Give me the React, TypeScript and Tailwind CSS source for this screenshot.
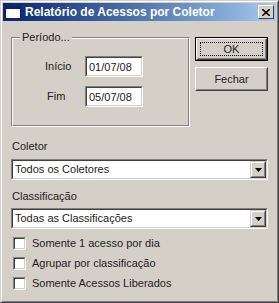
import React from "react";

const Sunken = ({ children, className = "" }: { children: React.ReactNode; className?: string }) => (
  <div className={`border border-t-[#808080] border-l-[#808080] border-r-white border-b-white ${className}`}>
    <div className="h-full border border-t-[#404040] border-l-[#404040] border-r-[#d4d0c8] border-b-[#d4d0c8] bg-white">
      {children}
    </div>
  </div>
);

const Combo = ({ text }: { text: string }) => (
  <Sunken className="h-[21px] mx-[8px]">
    <div className="flex h-full items-center">
      <span className="flex-1 pl-[2px] text-[#222]">{text}</span>
      <div className="w-[16px] h-[17px] border border-t-[#d4d0c8] border-l-[#d4d0c8] border-r-[#404040] border-b-[#404040] bg-[#d4d0c8]">
        <div className="h-full border border-t-white border-l-white border-r-[#808080] border-b-[#808080] flex items-center justify-center">
          <svg width="7" height="4" viewBox="0 0 7 4"><path d="M0 0h7L3.5 4z" fill="#000" /></svg>
        </div>
      </div>
    </div>
  </Sunken>
);

const Check = ({ label }: { label: string }) => (
  <div className="flex items-center h-[20px] pl-[10px]">
    <Sunken className="w-[13px] h-[13px]"><div /></Sunken>
    <span className="ml-[6px] text-[#222]">{label}</span>
  </div>
);

const Button = ({ label, focused }: { label: string; focused?: boolean }) => (
  <div className={`w-[73px] h-[24px] ${focused ? "border border-black" : ""}`}>
    <div className="h-full border border-t-white border-l-white border-r-[#404040] border-b-[#404040]">
      <div className="h-full border border-t-[#d4d0c8] border-l-[#d4d0c8] border-r-[#808080] border-b-[#808080] flex items-center justify-center p-[2px]">
        <div className={`w-full h-full flex items-center justify-center ${focused ? "border border-dotted border-black" : ""}`}>
          <span className="text-[#222]">{label}</span>
        </div>
      </div>
    </div>
  </div>
);

export default function App() {
  return (
    <div className="w-[279px] h-[303px] bg-[#d4d0c8] border border-t-[#d4d0c8] border-l-[#d4d0c8] border-r-[#404040] border-b-[#404040] font-['Liberation_Sans',sans-serif] text-[11px] leading-none">
      <div className="h-full border border-t-white border-l-white border-r-[#808080] border-b-[#808080] p-[1px] flex flex-col">
        <div className="h-[18px] flex items-center bg-gradient-to-r from-[#0a246a] to-[#a6caf0] pl-[2px] pr-[2px]">
          <div className="w-[16px] h-[13px] bg-white border border-[#0a246a] border-t-[3px]" />
          <span className="ml-[4px] flex-1 text-white font-bold text-[12px]">Relatório de Acessos por Coletor</span>
          <div className="w-[16px] h-[14px] bg-[#d4d0c8] border border-t-white border-l-white border-r-[#404040] border-b-[#404040] flex items-center justify-center">
            <svg width="8" height="7" viewBox="0 0 8 7"><path d="M0 0L8 7M8 0L0 7" stroke="#000" strokeWidth="1.6" /></svg>
          </div>
        </div>
        <div className="flex-1 flex flex-col">
          <div className="flex mt-[16px] px-[8px] justify-between">
            <div className="relative w-[179px] h-[90px] border border-t-[#808080] border-l-[#808080] border-r-white border-b-white">
              <div className="h-full border border-t-white border-l-white border-r-[#808080] border-b-[#808080] flex flex-col pt-[17px]">
                <div className="flex items-center h-[21px]">
                  <span className="w-[72px] pl-[32px] text-[#222]">Início</span>
                  <Sunken className="w-[58px] h-[21px]"><div className="pl-[2px] pt-[4px] text-[#222]">01/07/08</div></Sunken>
                </div>
                <div className="flex items-center h-[21px] mt-[9px]">
                  <span className="w-[72px] pl-[34px] text-[#222]">Fim</span>
                  <Sunken className="w-[58px] h-[21px]"><div className="pl-[2px] pt-[4px] text-[#222]">05/07/08</div></Sunken>
                </div>
              </div>
              <span className="absolute left-[8px] top-[-6px] px-[2px] bg-[#d4d0c8] text-[#222]">Período...</span>
            </div>
            <div className="flex flex-col gap-[6px] mr-[0px]">
              <Button label="OK" focused />
              <Button label="Fechar" />
            </div>
          </div>
          <div className="mt-[14px] pl-[9px] text-[#222]">Coletor</div>
          <div className="mt-[7px]"><Combo text="Todos os Coletores" /></div>
          <div className="mt-[11px] pl-[9px] text-[#222]">Classificação</div>
          <div className="mt-[6px]"><Combo text="Todas as Classificações" /></div>
          <div className="mt-[4px] flex flex-col">
            <Check label="Somente 1 acesso por dia" />
            <Check label="Agrupar por classificação" />
            <Check label="Somente Acessos Liberados" />
          </div>
        </div>
      </div>
    </div>
  );
}
